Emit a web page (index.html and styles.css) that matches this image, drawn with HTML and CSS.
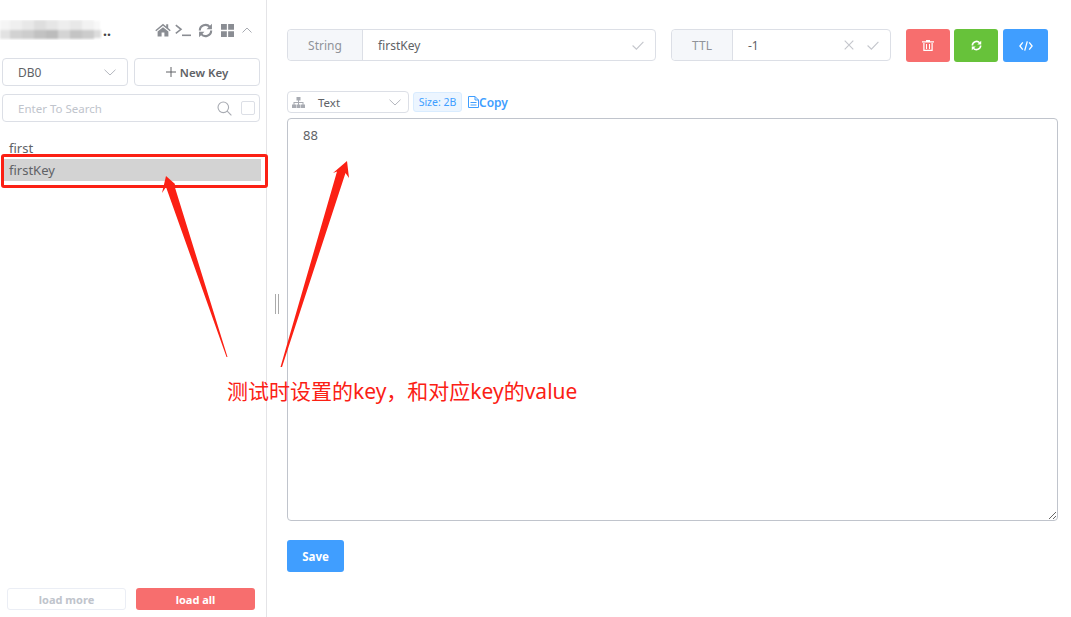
FILE: index.html
```html
<!DOCTYPE html>
<html lang="zh">
<head>
<meta charset="utf-8">
<title>Redis key</title>
<link rel="stylesheet" href="styles.css">
</head>
<body>
<div class="app">
  <aside class="side">
    <div class="conn">
      <div class="conn-name">
        <svg width="102" height="20" viewBox="0 0 102 20"><g class="blur-g">
          <rect x="0" y="0" width="10" height="10" fill="#f5f5f5"/><rect x="10" y="0" width="12" height="10" fill="#efefef"/><rect x="22" y="0" width="12" height="10" fill="#e8e8e8"/><rect x="34" y="0" width="12" height="10" fill="#dedede"/><rect x="46" y="0" width="12" height="10" fill="#e6e6e6"/><rect x="58" y="0" width="12" height="10" fill="#eeeeee"/><rect x="70" y="0" width="12" height="10" fill="#e8e8e8"/><rect x="82" y="0" width="12" height="10" fill="#f2f2f2"/><rect x="94" y="1" width="6" height="9" fill="#f8f8f8"/>
          <rect x="0" y="10" width="10" height="9" fill="#e2e2e2"/><rect x="10" y="10" width="12" height="9" fill="#d2d2d2"/><rect x="22" y="10" width="12" height="9" fill="#cdcdcd"/><rect x="34" y="10" width="12" height="9" fill="#c2c2c2"/><rect x="46" y="10" width="12" height="9" fill="#bcbcbc"/><rect x="58" y="10" width="12" height="9" fill="#d4d4d4"/><rect x="70" y="10" width="12" height="9" fill="#c4c4c4"/><rect x="82" y="10" width="12" height="9" fill="#cccccc"/><rect x="94" y="10" width="7" height="8" fill="#dcdcdc"/>
        </g></svg>
        <span class="dots">..</span>
      </div>
      <div class="conn-icons">
        <svg class="ic-home" width="16" height="14" viewBox="0 0 16 14"><path fill="#8a8d93" d="M8 0.800 0.300 7.200l.9 1L8 2.700l6.800 5.500.9-1-2.500-2.100V1.300h-2v2.200zM2.600 8.600V13.600h4V9.600h2.800v4h4V8.600L8 4.200z"/></svg>
        <svg class="ic-term" width="16" height="14" viewBox="0 0 16 14"><path fill="none" stroke="#8a8d93" stroke-width="1.600" d="M.8 2.200 6 6.300.8 10.400"/><path stroke="#8a8d93" stroke-width="1.600" d="M7 12.300h9"/></svg>
        <svg class="ic-ref" width="15" height="15" viewBox="0 0 14 14"><path fill="none" stroke="#8a8d93" stroke-width="2" d="M1.700 7A5.300 5.300 0 0 1 11 3.600M12.300 7A5.300 5.300 0 0 1 3 10.400"/><path fill="#8a8d93" d="M13 .8v5H8zM1 13.200v-5h5z"/></svg>
        <svg class="ic-grid" width="13" height="13" viewBox="0 0 12 12"><path fill="#8a8d93" d="M0 0h5.400v5.400H0zM6.600 0H12v5.400H6.600zM0 6.600h5.400V12H0zM6.600 6.600H12V12H6.600z"/></svg>
        <svg class="ic-up" width="10" height="6" viewBox="0 0 10 6"><path fill="none" stroke="#a8abb2" d="M.5 5.500 5 1l4.500 4.500"/></svg>
      </div>
    </div>
    <div class="db-row">
      <div class="field db">
        <span>DB0</span>
        <svg width="12" height="7" viewBox="0 0 12 7"><path fill="none" stroke="#b4b7be" d="M.5.7 6 6l5.500-5.300"/></svg>
      </div>
      <div class="field newkey">
        <svg width="10" height="10" viewBox="0 0 10 10"><path stroke="#606266" d="M5 0v10M0 5h10"/></svg>
        <span>New Key</span>
      </div>
    </div>
    <div class="field search">
      <span class="placeholder">Enter To Search</span>
      <svg width="15" height="15" viewBox="0 0 15 15"><circle cx="6.300" cy="6.300" r="5.300" fill="none" stroke="#a8abb2" stroke-width="1.100"/><path stroke="#a8abb2" stroke-width="1.100" d="m10.200 10.200 4.200 4.200"/></svg>
      <span class="check"></span>
    </div>
    <ul class="keys">
      <li class="key">first</li>
      <li class="key selected">firstKey</li>
    </ul>
    <div class="pager">
      <div class="btn-more">load more</div>
      <div class="btn-all">load all</div>
    </div>
  </aside>
  <div class="gutter"><div class="grip"></div></div>
  <main class="detail">
    <div class="top">
      <div class="group g-key">
        <div class="prefix p-key">String</div>
        <div class="gval"><span>firstKey</span>
          <svg width="12" height="9" viewBox="0 0 12 9"><path fill="none" stroke="#c4c6cc" stroke-width="1.100" d="m.6 4.500 3.800 3.700L11.400.8"/></svg>
        </div>
      </div>
      <div class="group g-ttl">
        <div class="prefix p-ttl">TTL</div>
        <div class="gval"><span>-1</span>
          <span class="gicons">
            <svg width="10" height="10" viewBox="0 0 10 10"><path fill="none" stroke="#c4c6cc" stroke-width="1.100" d="m.7.700 8.600 8.600M9.300.7.700 9.300"/></svg>
            <svg width="12" height="9" viewBox="0 0 12 9"><path fill="none" stroke="#c4c6cc" stroke-width="1.100" d="m.6 4.500 3.800 3.700L11.400.8"/></svg>
          </span>
        </div>
      </div>
      <div class="actions">
        <div class="act red"><svg width="12" height="11" viewBox="0 0 12 11"><path fill="#fff" d="M4 0h4v1.200h4v1.300H0V1.200h4z"/><path fill="none" stroke="#fff" stroke-width="1.200" d="M1.900 3v7.400h8.200V3"/><path stroke="#fff" d="M4.500 4v5M7.500 4v5"/></svg></div>
        <div class="act green"><svg width="11" height="11" viewBox="0 0 14 14"><path fill="none" stroke="#fff" stroke-width="2" d="M1.700 7A5.300 5.300 0 0 1 11 3.600M12.300 7A5.300 5.300 0 0 1 3 10.400"/><path fill="#fff" d="M13 .8v5H8zM1 13.200v-5h5z"/></svg></div>
        <div class="act blue"><svg width="14" height="10" viewBox="0 0 14 10"><path fill="none" stroke="#fff" stroke-width="1.300" d="M3.800 1.300.9 5l2.900 3.700M10.200 1.300 13.100 5l-2.900 3.700M8.300.3 5.700 9.700"/></svg></div>
      </div>
    </div>
    <div class="format">
      <div class="fmt-select">
        <svg width="13" height="11" viewBox="0 0 13 11"><path fill="#a8abb2" d="M4.500 0h4v3.500H7V5h4.500v2.500H13V11H9V7.500h1.500V6h-3.500v1.500h1.500V11h-4V7.500H6V6H2.500v1.500H4V11H0V7.500h1.500V5H6V3.500H4.500z"/></svg>
        <span class="fmt-text">Text</span>
        <svg width="12" height="7" viewBox="0 0 12 7"><path fill="none" stroke="#b4b7be" d="M.5.7 6 6l5.500-5.300"/></svg>
      </div>
      <div class="tag">Size: 2B</div>
      <div class="copy">
        <svg width="11" height="12" viewBox="0 0 11 12"><path fill="none" stroke="#409eff" d="M.5.500h6.500l3.500 3.500v7.500H.5zM7 .5V4h3.500M2.500 6.500h6M2.500 9h6"/></svg>Copy
      </div>
    </div>
    <textarea class="value" spellcheck="false">88</textarea>
    <div class="save">Save</div>
  </main>
</div>
<div class="mark">
  <div class="mark-box"></div>
  <svg class="arrows" width="1071" height="617" viewBox="0 0 1071 617"><path fill="#fb2014" d="M166 176 175 184 174.500 186 227.500 357 226.500 357 166 187 162 193zM347 161 349 178 345.500 173 282 367 280.500 367 337 171.500 333 173z"/></svg>
  <div class="mark-text">测试时设置的key，和对应key的value</div>
</div>
</body>
</html>
```

FILE: styles.css
```css
* { box-sizing: border-box; }
html, body { margin: 0; height: 100%; overflow: hidden; background: #fff; }
body {
  font-family: "Noto Sans", "Noto Sans CJK SC", sans-serif;
  font-size: 12px;
  color: #606266;
  position: relative;
}
svg { display: block; flex: none; }
.app { display: flex; height: 617px; }

.side {
  width: 267px;
  flex: none;
  border-right: 1px solid #e4e4e7;
  padding: 20px 6px 7px 2px;
  display: flex;
  flex-direction: column;
}
.conn { display: flex; justify-content: space-between; align-items: center; height: 20px; }
.conn-name { display: flex; align-items: flex-end; margin-left: -2px; }
.blur-g { filter: blur(1px); }
.dots { font-weight: 700; font-size: 14px; color: #444; line-height: 18px; margin-left: 1px; }
.conn-icons { display: flex; align-items: center; margin-right: 8px; }
.ic-term { margin-left: 4px; }
.ic-ref { margin-left: 7px; }
.ic-grid { margin-left: 8px; }
.ic-up { margin-left: 8px; }

.field {
  border: 1px solid #dcdfe6;
  border-radius: 4px;
  height: 28px;
  display: flex;
  align-items: center;
}
.db-row { display: flex; gap: 6px; margin-top: 18px; }
.db { width: 126px; padding: 0 11px 0 15px; justify-content: space-between; }
.newkey { width: 126px; justify-content: center; font-weight: 600; font-size: 11.500px; gap: 4px; }
.search { margin-top: 8px; padding: 0 4px 0 15px; }
.placeholder { color: #c0c4cc; font-size: 11.500px; flex: 1; }
.check {
  width: 14px;
  height: 14px;
  border: 1px solid #dcdfe6;
  border-radius: 2px;
  margin-left: 9px;
}
.keys { list-style: none; margin: 15px 0 0 1px; padding: 0; }
.key { height: 22px; line-height: 22px; padding-left: 6px; font-size: 13px; width: 258px; }
.selected { background: #d3d3d3; }
.pager { margin-top: auto; display: flex; gap: 10px; padding-left: 5px; }
.btn-more, .btn-all {
  width: 119px;
  height: 22px;
  border-radius: 3px;
  font-size: 11px;
  font-weight: 700;
  display: flex;
  align-items: center;
  justify-content: center;
}
.btn-more { border: 1px solid #ebeef5; color: #c0c4cc; }
.btn-all { background: #f76e6e; color: #fff; }

.gutter { width: 20px; flex: none; display: flex; align-items: center; justify-content: center; padding-bottom: 10px; }
.grip { width: 4px; height: 20px; border-left: 1px solid #aaa; border-right: 1px solid #aaa; }

.detail { width: 771px; flex: none; padding-top: 29px; display: flex; flex-direction: column; align-items: flex-start; }
.top { display: flex; width: 100%; }
.group { display: flex; height: 32px; border: 1px solid #dcdfe6; border-radius: 4px; font-size: 12px; }
.g-key { width: 369px; }
.g-ttl { width: 220px; margin-left: 15px; }
.prefix {
  background: #f5f7fa;
  border-right: 1px solid #dcdfe6;
  color: #909399;
  display: flex;
  align-items: center;
  justify-content: center;
  border-radius: 4px 0 0 4px;
}
.p-key { width: 75px; }
.p-ttl { width: 61px; }
.gval { flex: 1; display: flex; align-items: center; justify-content: space-between; padding: 0 11px 0 15px; }
.gicons { display: flex; align-items: center; gap: 13px; }
.actions { display: flex; gap: 4px; margin-left: 15px; }
.act { width: 44px; height: 33px; border-radius: 3px; display: flex; align-items: center; justify-content: center; }
.red { background: #f76e6e; }
.green { background: #67c23a; }
.blue { background: #409eff; margin-left: 1px; width: 45px; }

.format { display: flex; align-items: center; margin-top: 29px; height: 22px; }
.fmt-select {
  width: 122px;
  height: 22px;
  border: 1px solid #dcdfe6;
  border-radius: 4px;
  display: flex;
  align-items: center;
  padding: 0 7px 0 4px;
}
.fmt-text { flex: 1; padding-left: 13px; font-size: 11.500px; }
.tag {
  margin-left: 4px;
  width: 49px;
  height: 20px;
  background: #ecf5ff;
  border: 1px solid #d9ecff;
  border-radius: 3px;
  color: #409eff;
  font-size: 10.500px;
  display: flex;
  align-items: center;
  justify-content: center;
}
.copy { margin-left: 6px; display: flex; align-items: center; color: #409eff; font-weight: 600; font-size: 12px; }
.value {
  display: block;
  margin-top: 5px;
  width: 771px;
  height: 403px;
  border: 1px solid #c0c4cc;
  border-radius: 4px;
  padding: 5px 15px;
  font: 13px/22px "Noto Sans", "Noto Sans CJK SC", sans-serif;
  color: #606266;
  outline: none;
}
.save {
  margin-top: 19px;
  width: 57px;
  height: 32px;
  background: #409eff;
  color: #fff;
  border-radius: 3px;
  font-size: 11.500px;
  font-weight: 700;
  display: flex;
  align-items: center;
  justify-content: center;
}

.mark-box {
  position: absolute;
  left: 1px;
  top: 154px;
  width: 267px;
  height: 34px;
  border: 3px solid #fb2014;
  border-radius: 3px;
}
.arrows { position: absolute; left: 0; top: 0; }
.mark-text {
  position: absolute;
  left: 227px;
  top: 376px;
  font-size: 21px;
  line-height: 30px;
  color: #fb2014;
  white-space: nowrap;
}
```
